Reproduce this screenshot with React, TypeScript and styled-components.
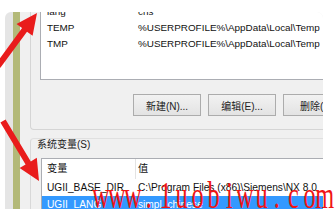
import React from 'react';
import styled, { createGlobalStyle } from 'styled-components';

const GlobalStyle = createGlobalStyle`
  html, body {
    margin: 0;
    padding: 0;
    background: #fff;
  }
  body {
    font-family: "Liberation Sans", "Noto Sans CJK SC", sans-serif;
  }
`;

const Screen = styled.div`
  position: relative;
  width: 335px;
  height: 209px;
  box-sizing: border-box;
  padding: 12px 0 0 5px;
  overflow: hidden;
  background: #fff;
`;

const Frame = styled.div`
  display: flex;
  width: 318px;
  height: 197px;
  border-radius: 6px 6px 0 0;
  overflow: hidden;
`;

const Strip = styled.div<{ $color: string; $w: number }>`
  flex: none;
  width: ${({ $w }) => $w}px;
  background: ${({ $color }) => $color};
`;

const Dialog = styled.div`
  flex: 1;
  min-width: 0;
  display: flex;
  flex-direction: column;
  padding-left: 10px;
  background: #f0f0f0;
  color: #111;
  font-size: 10px;
`;

const UserGroup = styled.div`
  margin-right: -12px;
  padding: 0 0 13px 9px;
  border-left: 1px solid #d5d5d5;
  border-bottom: 1px solid #d5d5d5;
  border-bottom-left-radius: 4px;
`;

const ListBox = styled.div<{ $height?: number }>`
  border: 1px solid #abadb3;
  background: #fff;
  ${({ $height }) => ($height ? `height: ${$height}px;` : 'flex: 1;')}
`;

const TopList = styled(ListBox)`
  margin-top: -9px;
  font-size: 9.9px;
`;

const Row = styled.div<{ $col: number; $h: number; $selected?: boolean }>`
  display: grid;
  grid-template-columns: ${({ $col }) => $col}px 1fr;
  height: ${({ $h }) => $h}px;
  line-height: ${({ $h }) => $h}px;
  white-space: nowrap;
  background: ${({ $selected }) => ($selected ? '#3399ff' : 'transparent')};
  color: ${({ $selected }) => ($selected ? '#fff' : 'inherit')};
`;

const NameCell = styled.div<{ $pad: number; $divider?: boolean }>`
  padding-left: ${({ $pad }) => $pad}px;
  border-right: ${({ $divider }) => ($divider ? '1px solid #e3e3e3' : 'none')};
`;

const ValueCell = styled.div<{ $pad: number }>`
  padding-left: ${({ $pad }) => $pad}px;
`;

const ButtonRow = styled.div`
  display: flex;
  gap: 7px;
  margin: 14px 0 0 93px;
`;

const Button = styled.div`
  flex: none;
  display: flex;
  align-items: center;
  justify-content: center;
  width: 68px;
  height: 22px;
  box-sizing: border-box;
  border: 1px solid #acacac;
  background: linear-gradient(#f2f2f2, #e3e3e3);
  font-size: 10px;
  color: #222;
`;

const SysGroup = styled.div`
  flex: 1;
  display: flex;
  flex-direction: column;
  margin: 8px -12px 0 0;
  border-top: 1px solid #e0e0e0;
  border-left: 1px solid #d8d8d8;
  border-top-left-radius: 4px;
`;

const GroupLabel = styled.div`
  height: 12px;
  padding-left: 6px;
  line-height: 12px;
  font-size: 10px;
  color: #222;
`;

const BottomList = styled(ListBox)`
  margin: 7px 0 0 10px;
  font-size: 10.2px;
`;

const Watermark = styled.div`
  position: absolute;
  left: 93px;
  top: 176px;
  display: flex;
  color: #f01414;
  font-family: "Liberation Serif", serif;
  font-size: 38px;
  line-height: 38px;
`;

const WmChar = styled.div`
  display: flex;
  justify-content: center;
  width: 16px;
`;

const WmGlyph = styled.span`
  display: inline-block;
  transform: scaleX(0.64);
`;

const Overlay = styled.svg`
  position: absolute;
  left: 0;
  top: 0;
`;

function arrowPoints(x1: number, y1: number, x2: number, y2: number, shaft = 3, headLen = 21, headW = 10) {
  const dx = x2 - x1;
  const dy = y2 - y1;
  const len = Math.hypot(dx, dy);
  const ux = dx / len;
  const uy = dy / len;
  const px = -uy;
  const py = ux;
  const bx = x2 - ux * headLen;
  const by = y2 - uy * headLen;
  const pts = [
    [x1 + px * shaft, y1 + py * shaft],
    [bx + px * shaft, by + py * shaft],
    [bx + px * headW, by + py * headW],
    [x2, y2],
    [bx - px * headW, by - py * headW],
    [bx - px * shaft, by - py * shaft],
    [x1 - px * shaft, y1 - py * shaft],
  ];
  return pts.map(p => p.map(v => v.toFixed(1)).join(',')).join(' ');
}

const userVars = [
  ['lang', 'chs'],
  ['TEMP', '%USERPROFILE%\\AppData\\Local\\Temp'],
  ['TMP', '%USERPROFILE%\\AppData\\Local\\Temp'],
];

const sysVars = [
  { name: 'UGII_BASE_DIR', value: 'C:\\Program Files (x86)\\Siemens\\NX 8.0' },
  { name: 'UGII_LANG', value: 'simpl_chinese', selected: true },
];

export default function App() {
  return (
    <>
      <GlobalStyle />
      <Screen>
        <Frame>
          <Strip $w={8} $color="#e5e5e5" />
          <Strip $w={7} $color="#b3b978" />
          <Dialog>
            <UserGroup>
              <TopList $height={75}>
                {userVars.map(([name, value]) => (
                  <Row key={name} $col={97} $h={16}>
                    <NameCell $pad={6}>{name}</NameCell>
                    <ValueCell $pad={0}>{value}</ValueCell>
                  </Row>
                ))}
              </TopList>
              <ButtonRow>
                <Button>新建(N)...</Button>
                <Button>编辑(E)...</Button>
                <Button>删除(D)</Button>
              </ButtonRow>
            </UserGroup>
            <SysGroup>
              <GroupLabel>系统变量(S)</GroupLabel>
              <BottomList>
                <Row $col={94} $h={20}>
                  <NameCell $pad={5} $divider>变量</NameCell>
                  <ValueCell $pad={2}>值</ValueCell>
                </Row>
                {sysVars.map(v => (
                  <Row key={v.name} $col={94} $h={17} $selected={v.selected}>
                    <NameCell $pad={5}>{v.name}</NameCell>
                    <ValueCell $pad={2}>{v.value}</ValueCell>
                  </Row>
                ))}
              </BottomList>
            </SysGroup>
          </Dialog>
        </Frame>

        <Watermark>
          {'www.1uobiwu.com'.split('').map((ch, i) => (
            <WmChar key={i}>
              <WmGlyph>{ch}</WmGlyph>
            </WmChar>
          ))}
        </Watermark>

        <Overlay width="335" height="209" viewBox="0 0 335 209">
          <polygon points={arrowPoints(-2, 66, 37, 13)} fill="#e91c1c" />
          <polygon points={arrowPoints(3, 121, 39, 181)} fill="#e91c1c" />
        </Overlay>
      </Screen>
    </>
  );
}
